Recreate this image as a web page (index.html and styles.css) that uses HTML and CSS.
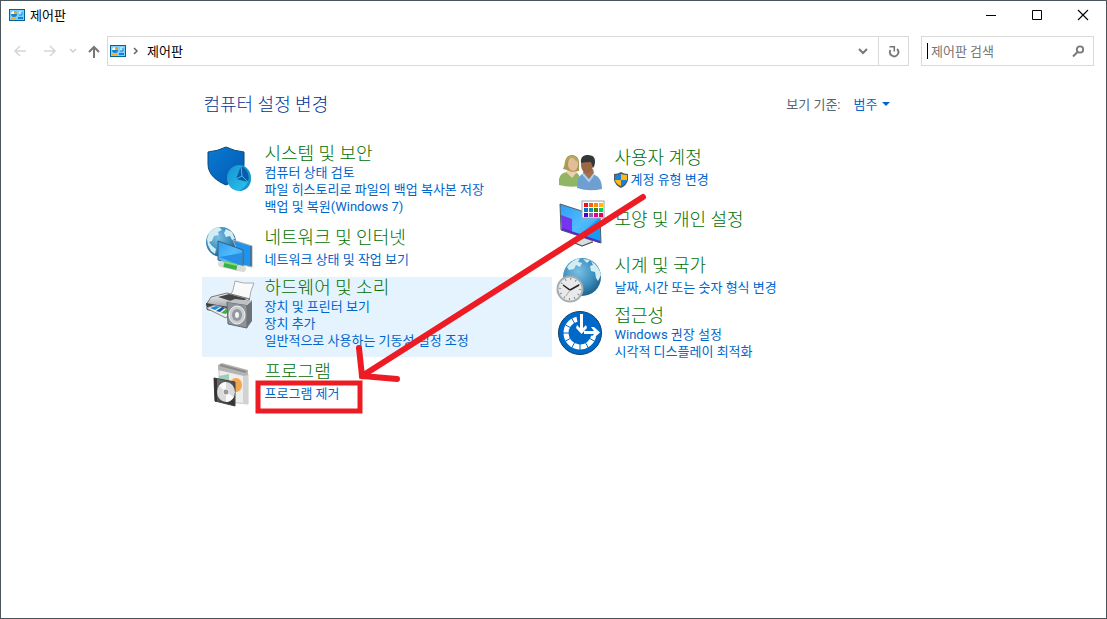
FILE: index.html
```html
<!DOCTYPE html>
<html lang="ko">
<head>
  <meta charset="UTF-8">
  <meta name="viewport" content="width=device-width, initial-scale=1.0">
  <title>제어판</title>
  <link rel="stylesheet" href="styles.css">
</head>
<body>
  <svg width="0" height="0" class="defs" aria-hidden="true">
    <defs>
      <linearGradient id="shieldBlue" x1="0" y1="0" x2="1" y2="1">
        <stop offset="0" stop-color="#0a7ad6"/><stop offset="1" stop-color="#0059ad"/>
      </linearGradient>
      <linearGradient id="pieBlue" x1="0" y1="0" x2="1" y2="1">
        <stop offset="0" stop-color="#1590d2"/><stop offset="1" stop-color="#2fc8f0"/>
      </linearGradient>
      <radialGradient id="globe" cx="0.4" cy="0.35" r="0.7">
        <stop offset="0" stop-color="#7cc0e4"/><stop offset="0.6" stop-color="#3c8fbf"/><stop offset="1" stop-color="#1c5c86"/>
      </radialGradient>
      <linearGradient id="screen" x1="0" y1="0" x2="1" y2="1">
        <stop offset="0" stop-color="#2b9df4"/><stop offset="0.5" stop-color="#52bbff"/><stop offset="1" stop-color="#1f9cf5"/>
      </linearGradient>
      <linearGradient id="metal" x1="0" y1="0" x2="0" y2="1">
        <stop offset="0" stop-color="#f4f4f4"/><stop offset="1" stop-color="#9a9c9e"/>
      </linearGradient>
      <linearGradient id="dark" x1="0" y1="0" x2="1" y2="1">
        <stop offset="0" stop-color="#777"/><stop offset="1" stop-color="#2c2e30"/>
      </linearGradient>
      <symbol id="panelIcon" viewBox="0 0 16 12">
        <rect width="16" height="12" fill="#00639c"/>
        <rect x="1" y="1" width="14" height="10" fill="#7cd0fb"/>
        <circle cx="5" cy="5" r="3" fill="#1583cf"/>
        <path d="M5 5V2A3 3 0 0 0 2 5z" fill="#fff"/>
        <path d="M5 5V2a3 3 0 0 1 3 3z" fill="#f7a51c"/>
        <path d="M10 3h3M10 5h3" stroke="#e8f8ff"/>
        <path d="M13 3v3h-3" stroke="#1583cf" fill="none"/>
        <path d="M2 9.500h5" stroke="#f7a51c"/>
        <path d="M9 8.500h5M9 9.500h5" stroke="#1583cf"/>
      </symbol>
    </defs>
  </svg>

  <div class="window">
    <header class="titlebar">
      <svg class="app-icon" width="16" height="12"><use href="#panelIcon"/></svg>
      <span class="app-name">제어판</span>
      <button class="win-btn" aria-label="최소화"><svg width="12" height="12"><path d="M1 6.500h10" stroke="#000"/></svg></button>
      <button class="win-btn" aria-label="최대화"><svg width="12" height="12"><path d="M1.500 1.500h9v9h-9z" stroke="#000" fill="none"/></svg></button>
      <button class="win-btn" aria-label="닫기"><svg width="12" height="12"><path d="M1 1l10 10M11 1L1 11" stroke="#000" stroke-width="1.100"/></svg></button>
    </header>

    <nav class="toolbar">
      <button class="nav-btn" aria-label="뒤로"><svg width="14" height="12"><path d="M13 6H2M7 1L2 6l5 5" stroke="#d6d6d6" stroke-width="1.500" fill="none"/></svg></button>
      <button class="nav-btn" aria-label="앞으로"><svg width="14" height="12"><path d="M1 6h11M7 1l5 5-5 5" stroke="#d6d6d6" stroke-width="1.500" fill="none"/></svg></button>
      <button class="nav-btn recent" aria-label="최근 위치"><svg width="8" height="6"><path d="M1 1l3 3 3-3" stroke="#d0d0d0" stroke-width="1.500" fill="none"/></svg></button>
      <button class="nav-btn up" aria-label="위로"><svg width="12" height="13"><path d="M6 13V2M1 7l5-5 5 5" stroke="#777" stroke-width="2" fill="none"/></svg></button>

      <div class="address">
        <svg width="16" height="12"><use href="#panelIcon"/></svg>
        <svg class="crumb" width="6" height="8"><path d="M1 1l3 3-3 3" stroke="#666" stroke-width="1.500" fill="none"/></svg>
        <span class="path">제어판</span>
        <button class="addr-btn" aria-label="이전 위치"><svg width="10" height="8"><path d="M1 2l4 4 4-4" stroke="#777" stroke-width="2" fill="none"/></svg></button>
        <button class="addr-btn refresh" aria-label="새로 고침"><svg width="12" height="13"><path d="M9 4A4.200 4.200 0 1 1 2.500 5" stroke="#777" stroke-width="1.800" fill="none"/><path d="M1.500 1.700h4.800v4.800" stroke="#777" stroke-width="1.600" fill="none"/></svg></button>
      </div>

      <div class="search">
        <span class="cursor"></span>
        <input type="text" aria-label="제어판 검색" placeholder="제어판 검색">
        <svg width="13" height="12"><circle cx="8" cy="4.500" r="3.200" stroke="#777" stroke-width="1.800" fill="none"/><path d="M5.500 7L1 11.500" stroke="#777" stroke-width="2"/></svg>
      </div>
    </nav>

    <main class="panel">
      <div class="panel-head">
        <h1>컴퓨터 설정 변경</h1>
        <div class="view-by">
          <label for="view">보기 기준:</label>
          <select id="view"><option>범주</option></select>
          <svg width="8" height="5"><path d="M0 0h8L4 4z" fill="#0066cc"/></svg>
        </div>
      </div>

      <div class="columns">
        <div class="column">
          <section class="category">
            <svg class="icon" viewBox="0 0 48 48">
              <path d="M3 6Q13 5 21 1q8 4 18 5v12c0 11-9 17-18 21C12 35 3 29 3 18z" fill="url(#shieldBlue)" stroke="#0b4876"/>
              <ellipse cx="34" cy="32" rx="12" ry="13" fill="url(#pieBlue)"/>
              <path d="M34 19c7 0 11 6 12 13 0 8-5 13-12 13 5-3 9-7 9-13s-4-10-9-13z" fill="#1995cd"/>
              <path d="M36 20L31 33l12 3c2-7-1-13-7-16z" fill="#0a5ca8"/>
              <path d="M36 20l1 10 6 6M37 30l-6 3" stroke="#47b5ec" fill="none"/>
            </svg>
            <div class="info">
              <h2><a href="#">시스템 및 보안</a></h2>
              <a href="#">컴퓨터 상태 검토</a>
              <a href="#">파일 히스토리로 파일의 백업 복사본 저장</a>
              <a href="#">백업 및 복원(Windows 7)</a>
            </div>
          </section>

          <section class="category single">
            <svg class="icon" viewBox="0 0 48 48">
              <circle cx="16" cy="16" r="15" fill="url(#globe)"/>
              <path d="M4 7q4-5 10-6l3 3-4 2 1 3-5 1-2 5-3 1 3 4 4 3-1 5-4-3-3-6-1-6zM21 3l6 3 3 7-3 1-2-4-4 1-2-4z" fill="#d3edf5"/>
              <path d="M28 14l19 6v21l-9-2z" fill="#2094ed" stroke="#a6adb2"/>
              <path d="M46 20v20" stroke="#555"/>
              <path d="M13 15l25 9v18l-25-8z" fill="url(#screen)" stroke="#465c6b"/>
              <path d="M14 31L37 27v13z" fill="#278fe4"/>
              <path d="M27 38v4l6 2" stroke="#999" stroke-width="2" fill="none"/>
              <path d="M16 38l22 5" stroke="#d8dcd5" stroke-width="6" stroke-linecap="round"/>
              <path d="M19 38l13 3" stroke="#3fae48" stroke-width="6"/>
              <path d="M19 36l13 3" stroke="#7fda80" stroke-width="2"/>
            </svg>
            <div class="info">
              <h2><a href="#">네트워크 및 인터넷</a></h2>
              <a href="#">네트워크 상태 및 작업 보기</a>
            </div>
          </section>

          <section class="category selected">
            <svg class="icon" viewBox="0 0 48 48">
              <path d="M30 1q8 3 19 2-4 8-5 19l-20-4q5-7 6-17z" fill="#fafafa" stroke="#aaa"/>
              <path d="M6 17l16-4 23 6-15 10-29-4z" fill="url(#metal)" stroke="#777"/>
              <path d="M13 17l11-3 18 5-10 4z" fill="#444"/>
              <path d="M1 23l28 5v8L2 30z" fill="#3c3e41"/>
              <path d="M1 28l9-3 17 5-6 8z" fill="#eee" stroke="#888"/>
              <path d="M5 28l6-2 4 1-5 3z" fill="#1c8bd8"/>
              <path d="M11 31l6-4 3 1-5 4z" fill="#1554a6"/>
              <path d="M16 33l5-4 3 1-3 4z" fill="#43af3d"/>
              <path d="M22 22l20 3v23l-19-4z" fill="#8d959b" stroke="#636a70"/>
              <path d="M42 25l5-5v21l-5 7z" fill="#6c7378"/>
              <path d="M22 22l8-3 17 2-5 4z" fill="#bec2c5"/>
              <ellipse cx="32" cy="35" rx="8" ry="9" fill="#c9cdd0" stroke="#eef0f1"/>
              <ellipse cx="32" cy="35" rx="5" ry="6" fill="#92989d"/>
              <ellipse cx="32" cy="35" rx="2" ry="3" fill="#f5f5f5"/>
            </svg>
            <div class="info">
              <h2><a href="#">하드웨어 및 소리</a></h2>
              <a href="#">장치 및 프린터 보기</a>
              <a href="#">장치 추가</a>
              <a href="#">일반적으로 사용하는 기동성 설정 조정</a>
            </div>
          </section>

          <section class="category single">
            <svg class="icon" viewBox="0 0 48 48">
              <path d="M14 9l29 5v30l-29-3z" fill="#ededed" stroke="#c8c8c8"/>
              <path d="M38 14l5-2v31l-5 1z" fill="#d2d2d2"/>
              <path d="M13 5l4-2 26 7v5l-4 1-26-6z" fill="#b4b4b4"/>
              <path d="M15 5l26 7" stroke="#8a8a8a" stroke-width="2"/>
              <path d="M14 16l10-2v8H14z" fill="#9fcdb7"/>
              <ellipse cx="31" cy="25" rx="6" ry="7" fill="#f4a64c"/>
              <path d="M9 18l21 4v24L10 41z" fill="url(#dark)" stroke="#444"/>
              <path d="M9 18l3 1v22l-2 1z" fill="#333"/>
              <ellipse cx="21" cy="32" rx="9" ry="10" fill="#d9dbdc"/>
              <path d="M21 32l-7-6q3-4 7-4zM21 32l8 5q-3 5-8 5z" fill="#fafafa"/>
              <circle cx="21" cy="32" r="3" fill="#999" stroke="#eee"/>
            </svg>
            <div class="info">
              <h2><a href="#">프로그램</a></h2>
              <a href="#">프로그램 제거</a>
            </div>
          </section>
        </div>

        <div class="column">
          <section class="category single">
            <svg class="icon" viewBox="0 0 48 48">
              <path d="M4 39v-6q1-6 8-7h8q5 2 5 7v7q-11 2-21-1z" fill="#8fb565"/>
              <path d="M11 26l6 6 5-6-2-3h-7z" fill="#efd0ae"/>
              <path d="M8 23q2-4 2-8 2-7 8-6 6 1 6 8v8l-7 1-5-2z" fill="#a89a52"/>
              <ellipse cx="18" cy="18" rx="5" ry="7" fill="#e5bc98"/>
              <path d="M11 18q1-7 7-6 2 3 5 4-1-6-6-6-6 0-6 8z" fill="#b8aa63"/>
              <path d="M22 42q0-11 5-14l6-2 7 3q7 3 7 14-13 3-25-1z" fill="#6f9fd0"/>
              <path d="M28 27l6 6 5-6-1-4h-9z" fill="#a86f49"/>
              <ellipse cx="32" cy="19" rx="6" ry="8" fill="#9b6643"/>
              <path d="M26 17q-1-7 5-8 9-1 9 6 0 5-2 7l-2-6q-6 0-10 1z" fill="#343638"/>
              <path d="M28 28l6 7 5-7" stroke="#acd0ef" stroke-width="2" fill="none"/>
            </svg>
            <div class="info">
              <h2><a href="#">사용자 계정</a></h2>
              <a href="#" class="with-shield">
                <svg width="16" height="16" viewBox="0 0 16 16">
                  <path d="M8 0q3 2 7 2v6q-1 5-7 8-6-3-7-8V2q4 0 7-2z" fill="#505861"/>
                  <path d="M8 2v6H2V3q3 0 6-1zM8 8h6q-1 4-6 6z" fill="#1b82d8"/>
                  <path d="M8 2q3 1 6 1v5H8zM2 8h6v6Q3 12 2 8z" fill="#fdb91c"/>
                </svg>계정 유형 변경</a>
            </div>
          </section>

          <section class="category title-only">
            <svg class="icon" viewBox="0 0 48 48">
              <path d="M23 36h6v6h-6z" fill="#9ba3a8"/>
              <path d="M17 41l12-3 9 3-11 5z" fill="#d8dde0" stroke="#a5abaf"/>
              <path d="M17 42l10 4 11-4" stroke="#42474b" fill="none"/>
              <path d="M5 4l40 13 1 26L6 30z" fill="url(#screen)" stroke="#505c66"/>
              <path d="M6 15l11 4v14L7 29z" fill="#7734ef"/>
              <path d="M26 34l19-17v24z" fill="#159cf8"/>
              <path d="M7 29l38 13" stroke="#5829bd" stroke-width="2"/>
              <rect x="27" y="1" width="22" height="17" fill="#fff" stroke="#a0a0a0"/>
              <g stroke-width="4">
                <path d="M29 5h4" stroke="#e81123"/><path d="M34 5h4" stroke="#f7630c"/><path d="M39 5h4" stroke="#ff8c00"/><path d="M44 5h4" stroke="#ffb900"/>
                <path d="M29 10h4" stroke="#0078d7"/><path d="M34 10h4" stroke="#0099bc"/><path d="M39 10h4" stroke="#498205"/><path d="M44 10h4" stroke="#00cc6a"/>
                <path d="M29 15h4" stroke="#4c00c8"/><path d="M34 15h4" stroke="#8764b8"/><path d="M39 15h4" stroke="#e3008c"/><path d="M44 15h4" stroke="#ea005e"/>
              </g>
            </svg>
            <div class="info">
              <h2><a href="#">모양 및 개인 설정</a></h2>
            </div>
          </section>

          <section class="category single">
            <svg class="icon" viewBox="0 0 48 48">
              <circle cx="27" cy="23" r="19" fill="url(#globe)"/>
              <path d="M12 13q5-7 13-9l-2 4 4 1-2 4-4-2-2 4-5 1zM28 5l7 1-3 3zM36 7q8 5 10 14l-3 6-2-3-1-6-4-1-1-5 3-1z" fill="#d3edf5"/>
              <circle cx="15" cy="35" r="12.500" fill="#e7e9eb" stroke="#a6abaf" stroke-width="2"/>
              <circle cx="15" cy="35" r="10" fill="none" stroke="#80868b" stroke-width="2" stroke-dasharray="1 4.236"/>
              <path d="M8 31l7 5 9-5" stroke="#252525" stroke-width="1.500" fill="none"/>
              <path d="M15 36l-4 6" stroke="#c79d86"/>
            </svg>
            <div class="info">
              <h2><a href="#">시계 및 국가</a></h2>
              <a href="#">날짜, 시간 또는 숫자 형식 변경</a>
            </div>
          </section>

          <section class="category">
            <svg class="icon" viewBox="0 0 48 48">
              <circle cx="25" cy="25" r="21.500" fill="#0069c7" stroke="#0c3f6b"/>
              <path d="M22 11.300A14 14 0 1 0 38.700 28" fill="none" stroke="#fff" stroke-width="5"/>
              <path d="M20 16l-4-7M16 20l-7-4M15 25H8M16 30l-7 4M20 34l-4 7M25 35v7M30 34l4 7M34 30l7 4" stroke="#0069c7"/>
              <path d="M25 6h3v14l3-3 1 3-5.500 6L21 20l1-3 3 3z" fill="#fff"/>
              <path d="M29 23h10l-3-4h3l6 5.500-6 5.500h-3l3-4H29z" fill="#fff"/>
            </svg>
            <div class="info">
              <h2><a href="#">접근성</a></h2>
              <a href="#">Windows 권장 설정</a>
              <a href="#">시각적 디스플레이 최적화</a>
            </div>
          </section>
        </div>
      </div>

      <!-- red guide box and arrow over the list -->
      <svg class="marker" width="450" height="230" aria-hidden="true">
        <rect x="56" y="190" width="102" height="28" stroke-width="5"/>
        <path d="M441 4L160 183M157 155l3 28 35 3" stroke-width="6" stroke-linecap="round"/>
      </svg>
    </main>
  </div>
</body>
</html>
```
FILE: styles.css
```css
* {
  margin: 0;
  padding: 0;
  box-sizing: border-box;
}

body {
  font-family: Roboto, "Noto Sans CJK KR", sans-serif;
  font-size: 13px;
  line-height: 17px;
  color: #000;
  background: #fff;
}

a {
  color: #0066cc;
  text-decoration: none;
}

a:hover {
  text-decoration: underline;
}

button {
  display: flex;
  align-items: center;
  justify-content: center;
  border: none;
  background: none;
}

svg {
  flex: none;
}

.defs {
  position: absolute;
}

.window {
  min-height: 100vh;
  border: 1px solid #4b565c;
}

/* title bar */
.titlebar {
  display: flex;
  align-items: center;
  height: 28px;
  padding-left: 8px;
}

.app-name {
  flex: 1;
  margin-left: 5px;
}

.win-btn {
  width: 46px;
  height: 28px;
}

.win-btn:hover {
  background: #e5e5e5;
}

/* navigation row */
.toolbar {
  display: flex;
  align-items: center;
  height: 30px;
  margin-top: 7px;
  padding: 0 12px 0 4px;
}

.nav-btn {
  width: 30px;
  height: 30px;
}

.nav-btn.recent {
  width: 16px;
}

.nav-btn.up {
  width: 26px;
}

.address {
  flex: 1;
  display: flex;
  align-items: center;
  height: 30px;
  padding-left: 2px;
  border: 1px solid #d9d9d9;
}

.crumb {
  margin: 0 8px 0 7px;
}

.path {
  flex: 1;
}

.addr-btn {
  width: 30px;
  height: 28px;
}

.refresh {
  border-left: 1px solid #d9d9d9;
}

.search {
  display: flex;
  align-items: center;
  width: 173px;
  height: 30px;
  margin-left: 12px;
  padding: 0 8px 0 5px;
  border: 1px solid #d9d9d9;
}

.cursor {
  width: 1px;
  height: 16px;
  background: #000;
}

.search input {
  flex: 1;
  min-width: 0;
  padding-left: 3px;
  border: none;
  outline: none;
  font: inherit;
}

.search input::placeholder {
  color: #757575;
}

/* content */
.panel {
  position: relative;
  max-width: 704px;
  margin: 0 auto;
  padding: 26px 4px 0 0;
}

.panel-head {
  display: flex;
  align-items: center;
  justify-content: space-between;
  height: 24px;
  padding: 0 12px 0 2px;
}

h1,
h2 {
  font-size: 18px;
  font-weight: 300;
  line-height: 21px;
}

h1 {
  color: #003399;
}

h2 a {
  color: #007000;
}

.view-by {
  display: flex;
  align-items: center;
  color: #5a6472;
}

.view-by select {
  margin: 0 4px 0 13px;
  border: none;
  background: none;
  appearance: none;
  font: inherit;
  color: #0066cc;
}

.columns {
  display: flex;
  margin-top: 27px;
}

.column {
  flex: 1;
}

.category {
  display: flex;
  gap: 12px;
  min-height: 54px;
  padding: 0 0 8px 3px;
}

.icon {
  width: 48px;
  height: 48px;
  margin-top: 3px;
  overflow: visible;
}

.info {
  display: flex;
  flex-direction: column;
  align-items: flex-start;
}

.single,
.title-only {
  padding-bottom: 3px;
}

.single .info {
  gap: 3px;
  padding-top: 4px;
}

.title-only .info {
  padding-top: 12px;
}

.selected {
  background: #e5f3ff;
}

.with-shield {
  display: flex;
  align-items: center;
  gap: 2px;
  margin-left: -2px;
}

.marker {
  position: absolute;
  top: 127px;
  left: 0;
  fill: none;
  stroke: #ed1c24;
  pointer-events: none;
}
```
